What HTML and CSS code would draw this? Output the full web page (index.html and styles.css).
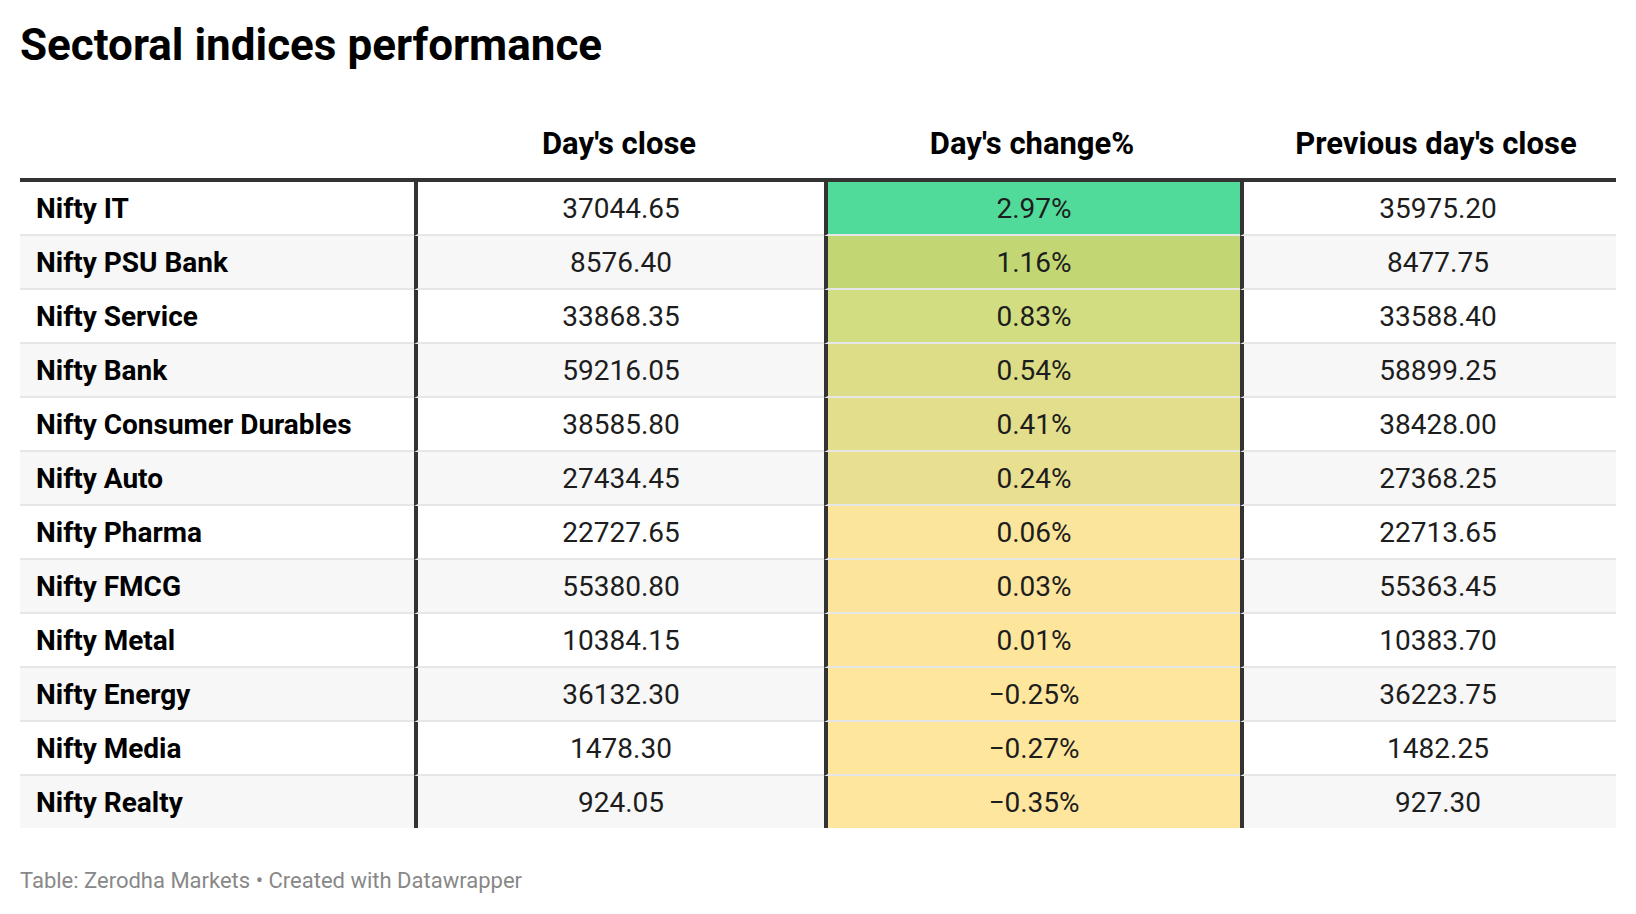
FILE: index.html
```html
<!DOCTYPE html>
<html>
<head>
<meta charset="utf-8">
<link rel="stylesheet" href="styles.css">
</head>
<body>
<div class="chart">
  <h1 class="title">Sectoral indices performance</h1>
  <table class="tbl">
    <colgroup>
      <col class="c1"><col class="c2"><col class="c3"><col class="c4">
    </colgroup>
    <thead>
      <tr><th></th><th>Day's close</th><th>Day's change%</th><th class="last">Previous day's close</th></tr>
    </thead>
    <tbody>
      <tr><td class="name">Nifty IT</td><td class="v">37044.65</td><td class="chg" style="background:#51db9a">2.97%</td><td class="v last">35975.20</td></tr>
      <tr><td class="name">Nifty PSU Bank</td><td class="v">8576.40</td><td class="chg" style="background:#c2d774">1.16%</td><td class="v last">8477.75</td></tr>
      <tr><td class="name">Nifty Service</td><td class="v">33868.35</td><td class="chg" style="background:#d2dc80">0.83%</td><td class="v last">33588.40</td></tr>
      <tr><td class="name">Nifty Bank</td><td class="v">59216.05</td><td class="chg" style="background:#dddd87">0.54%</td><td class="v last">58899.25</td></tr>
      <tr><td class="name">Nifty Consumer Durables</td><td class="v">38585.80</td><td class="chg" style="background:#e3de8b">0.41%</td><td class="v last">38428.00</td></tr>
      <tr><td class="name">Nifty Auto</td><td class="v">27434.45</td><td class="chg" style="background:#e9df91">0.24%</td><td class="v last">27368.25</td></tr>
      <tr><td class="name">Nifty Pharma</td><td class="v">22727.65</td><td class="chg" style="background:#fbe49c">0.06%</td><td class="v last">22713.65</td></tr>
      <tr><td class="name">Nifty FMCG</td><td class="v">55380.80</td><td class="chg" style="background:#fce49c">0.03%</td><td class="v last">55363.45</td></tr>
      <tr><td class="name">Nifty Metal</td><td class="v">10384.15</td><td class="chg" style="background:#fde59c">0.01%</td><td class="v last">10383.70</td></tr>
      <tr><td class="name">Nifty Energy</td><td class="v">36132.30</td><td class="chg" style="background:#fee69d">−0.25%</td><td class="v last">36223.75</td></tr>
      <tr><td class="name">Nifty Media</td><td class="v">1478.30</td><td class="chg" style="background:#fee69d">−0.27%</td><td class="v last">1482.25</td></tr>
      <tr><td class="name">Nifty Realty</td><td class="v">924.05</td><td class="chg" style="background:#fee69e">−0.35%</td><td class="v last">927.30</td></tr>
    </tbody>
  </table>
  <div class="footer">Table: Zerodha Markets • Created with Datawrapper</div>
</div>
</body>
</html>
```
FILE: styles.css
```css
html, body {
  margin: 0;
  padding: 0;
  background: #ffffff;
}
body {
  font-family: Roboto, "Liberation Sans", sans-serif;
  color: #1d1d1d;
}
.chart {
  padding: 19px 20px 0 20px;
}
.title {
  margin: 0;
  font-size: 44px;
  line-height: 52px;
  font-weight: 700;
  color: #000;
}
.tbl {
  margin-top: 55px;
  width: 1596px;
  table-layout: fixed;
  border-collapse: separate;
  border-spacing: 0;
  font-size: 28px;
}
.c1 { width: 394px; }
.c2 { width: 410px; }
.c3 { width: 416px; }
.c4 { width: 376px; }
.tbl th {
  font-weight: 700;
  font-size: 31px;
  line-height: 36px;
  padding: 0 0 16px 0;
  text-align: center;
  border-bottom: 4px solid #333333;
  color: #000;
}
.tbl td {
  height: 54px;
  padding: 2px 0 0 0;
  box-sizing: border-box;
  line-height: 30px;
  text-align: center;
  vertical-align: middle;
  border-bottom: 2px solid #e6e6e6;
}
.tbl th.last,
.tbl td.last {
  padding-left: 16px;
}
.tbl tbody tr:nth-child(even) td {
  background: #f7f7f7;
}
.tbl tbody tr:last-child td {
  border-bottom: none;
  height: 52px;
}
.tbl td + td {
  border-left: 4px solid #333333;
}
.tbl td.name {
  text-align: left;
  padding-left: 16px;
  font-weight: 700;
  color: #000;
}
.footer {
  margin-top: 41px;
  font-size: 22px;
  line-height: 24px;
  color: #888888;
}
```
